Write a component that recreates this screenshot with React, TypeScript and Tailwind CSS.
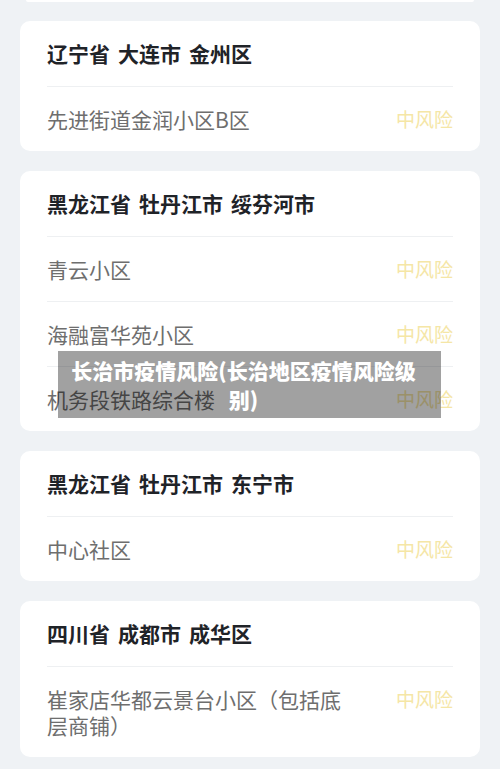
import React from 'react';

type Area = {
    title: string;
    places: string[];
};

const areas: Area[] = [
    { title: '辽宁省 大连市 金州区', places: ['先进街道金润小区B区'] },
    { title: '黑龙江省 牡丹江市 绥芬河市', places: ['青云小区', '海融富华苑小区', '机务段铁路综合楼'] },
    { title: '黑龙江省 牡丹江市 东宁市', places: ['中心社区'] },
    { title: '四川省 成都市 成华区', places: ['崔家店华都云景台小区（包括底层商铺）'] },
];

const AreaCard: React.FC<{ area: Area }> = ({ area }) => (
    <div className="bg-white rounded-[10px] px-[27px]">
        <div className="h-[65px] flex items-center gap-[8px] text-[21px] font-bold text-[#1f2328]">
            {area.title.split(' ').map((word) => (
                <span key={word}>{word}</span>
            ))}
        </div>
        {area.places.map((place) => (
            <div
                key={place}
                className="flex items-start justify-between border-t border-[#eef0f2] py-[19px] leading-[26px]"
            >
                <span className="flex-1 text-[21px] text-[#6e6e6e] pr-[46px]">{place}</span>
                <span className="text-[19px] text-[#f5e6a6] shrink-0">中风险</span>
            </div>
        ))}
    </div>
);

export default function App() {
    return (
        <div
            className="relative w-[500px] h-[769px] overflow-hidden bg-[#eff2f5] px-5"
            style={{ fontFamily: '"Noto Sans CJK SC", "Noto Sans", sans-serif' }}
        >
            <div className="h-[2px] mx-[6px] bg-white rounded-b-[4px]" />
            <div className="flex flex-col gap-5 pt-[19px]">
                {areas.map((area) => (
                    <AreaCard key={area.title} area={area} />
                ))}
            </div>

            <div className="absolute left-[58px] top-[351px] w-[383px] h-[67px] bg-black/[0.37] flex items-center justify-center pl-[6px] pr-[18px]">
                <p className="text-white text-[21px] font-black leading-[29px] text-center">
                    长治市疫情风险(长治地区疫情风险级别)
                </p>
            </div>
        </div>
    );
}
